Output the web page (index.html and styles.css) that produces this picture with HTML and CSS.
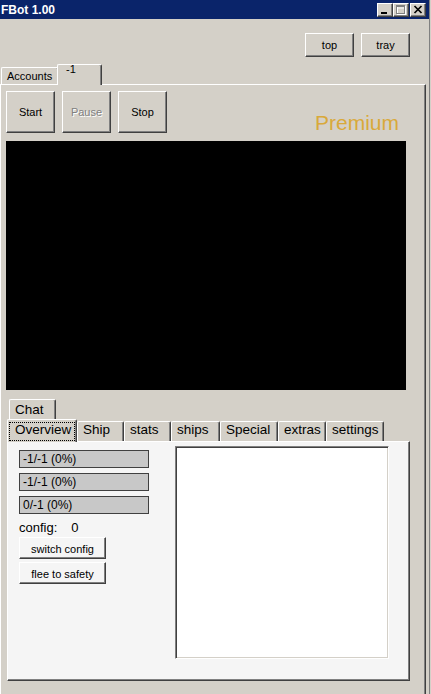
FILE: index.html
```html
<!DOCTYPE html>
<html>
<head>
<meta charset="utf-8">
<title>FBot 1.00</title>
<link rel="stylesheet" href="styles.css">
</head>
<body>
<div class="window">
  <div class="titlebar">
    <span class="title">FBot 1.00</span>
    <div class="wbtns">
      <span class="wbtn"><svg width="14" height="12" viewBox="0 0 14 12"><rect x="3" y="8" width="6" height="2" fill="#000"/></svg></span>
      <span class="wbtn"><svg width="14" height="12" viewBox="0 0 14 12"><g fill="none" stroke="#fff"><rect x="3.5" y="2.5" width="8" height="8"/><line x1="3" y1="4" x2="12" y2="4"/></g><g fill="none" stroke="#808080"><rect x="2.5" y="1.5" width="8" height="8"/><line x1="2" y1="2.5" x2="11" y2="2.5"/></g></svg></span>
      <span class="wbtn close"><svg width="14" height="12" viewBox="0 0 14 12"><path d="M3.5 2 L10.5 9 M10.5 2 L3.5 9" stroke="#000" stroke-width="1.7" fill="none"/></svg></span>
    </div>
  </div>
  <div class="client">
    <div class="toolbar">
      <button class="btn tb-btn">top</button>
      <button class="btn tb-btn">tray</button>
    </div>
    <div class="outer-tabs">
      <div class="tab tab-acc">Accounts</div>
      <div class="tab tab-sel1">-1</div>
    </div>
    <div class="outer-panel">
      <div class="controls">
        <button class="btn ctl">Start</button>
        <button class="btn ctl" disabled>Pause</button>
        <button class="btn ctl">Stop</button>
        <div class="premium">Premium</div>
      </div>
      <div class="screen"></div>
      <div class="chat-row">
        <div class="tab tab-chat">Chat</div>
      </div>
      <div class="inner-tabs">
        <div class="tab itab sel"><span class="focus">Overview</span></div>
        <div class="tab itab w-ship">Ship</div>
        <div class="tab itab w-stats">stats</div>
        <div class="tab itab w-ships">ships</div>
        <div class="tab itab w-special">Special</div>
        <div class="tab itab w-extras">extras</div>
        <div class="tab itab w-settings">settings</div>
      </div>
      <div class="inner-panel">
        <div class="leftcol">
          <div class="bar">-1/-1 (0%)</div>
          <div class="bar">-1/-1 (0%)</div>
          <div class="bar">0/-1 (0%)</div>
          <div class="config"><span>config:</span><span class="cfg-val">0</span></div>
          <button class="btn pbtn">switch config</button>
          <button class="btn pbtn pbtn2">flee to safety</button>
        </div>
        <div class="listbox"></div>
      </div>
    </div>
  </div>
</div>
</body>
</html>
```

FILE: styles.css
```css
* { box-sizing: border-box; }
html, body { margin: 0; padding: 0; }
body {
  width: 431px;
  height: 694px;
  overflow: hidden;
  background: #d4d0c8;
  font-family: "Liberation Sans", Arial, sans-serif;
  font-size: 11px;
  color: #000;
}
.window {
  width: 430px;
  height: 694px;
  border-right: 1px solid #808080;
  display: flex;
  flex-direction: column;
}
.titlebar {
  height: 19px;
  flex: none;
  background: #0a246a;
  display: flex;
  justify-content: space-between;
  align-items: flex-start;
  padding: 0 3px 0 1px;
}
.title {
  color: #fff;
  font-weight: bold;
  font-size: 12px;
  line-height: 17px;
  padding-top: 2px;
}
.wbtns { display: flex; padding-top: 3px; }
.wbtn {
  width: 16px;
  height: 14px;
  background: #d4d0c8;
  border: 1px solid;
  border-color: #fff #404040 #404040 #fff;
  box-shadow: inset -1px -1px #808080;
  display: flex;
}
.wbtn svg { display: block; }
.wbtn.close { margin-left: 1px; }

.client {
  flex: 1;
  display: flex;
  flex-direction: column;
  padding-top: 14px;
  min-height: 0;
}
.toolbar {
  display: flex;
  justify-content: flex-end;
  gap: 7px;
  padding-right: 19px;
}
.btn {
  font-family: "Liberation Sans", Arial, sans-serif;
  font-size: 11px;
  color: #000;
  background: #d4d0c8;
  border: 1px solid;
  border-color: #fff #404040 #404040 #fff;
  box-shadow: inset -1px -1px #808080;
  padding: 0;
  margin: 0;
  border-radius: 0;
}
.btn:disabled { color: #808080; text-shadow: 1px 1px #fff; }
.tb-btn { width: 49px; height: 24px; }

.tab {
  background: #d4d0c8;
  border-top: 1px solid #fff;
  border-left: 1px solid #fff;
  border-right: 1px solid #404040;
  box-shadow: inset -1px 0 #808080;
  border-radius: 2px 2px 0 0;
  white-space: nowrap;
}
.outer-tabs {
  display: flex;
  align-items: flex-end;
  height: 20px;
  margin-top: 7px;
  padding-left: 1px;
}
.tab-acc {
  width: 58px;
  height: 17px;
  padding: 1px 0 0 5px;
  line-height: 15px;
}
.tab-sel1 {
  width: 45px;
  height: 21px;
  margin-left: -2px;
  margin-bottom: -1px;
  padding-left: 8px;
  line-height: 9px;
  position: relative;
  z-index: 2;
}
.outer-panel {
  width: 426px;
  flex: 1;
  border-top: 1px solid #fff;
  border-left: 1px solid #fff;
  border-right: 1px solid #404040;
  box-shadow: inset -1px 0 #808080;
  padding: 6px 5px 0 5px;
}
.controls {
  display: flex;
  gap: 7px;
  align-items: flex-start;
  height: 42px;
}
.ctl { width: 49px; height: 42px; flex: none; }
.premium {
  margin-left: auto;
  margin-right: 21px;
  margin-top: 20px;
  font-size: 21px;
  line-height: 24px;
  color: #d9a93a;
}
.screen {
  width: 400px;
  height: 249px;
  background: #000;
  margin-top: 8px;
}
.chat-row {
  display: flex;
  margin-top: 9px;
  padding-left: 3px;
}
.tab-chat {
  width: 47px;
  height: 20px;
  font-size: 13.5px;
  line-height: 19px;
  padding-left: 5px;
}
.inner-tabs {
  display: flex;
  align-items: flex-end;
  height: 22px;
  padding-left: 3px;
}
.itab {
  height: 20px;
  font-size: 13.5px;
  line-height: 16px;
  padding-left: 5px;
}
.itab.sel {
  width: 70px;
  height: 23px;
  margin-left: -2px;
  margin-bottom: -1px;
  padding: 2px 0 0 1px;
  position: relative;
  z-index: 2;
}
.focus {
  display: block;
  width: 66px;
  height: 19px;
  border: 1px dotted #000;
  padding-left: 5px;
  line-height: 14px;
}
.w-ship { width: 47px; }
.w-stats { width: 47px; }
.w-ships { width: 49px; }
.w-special { width: 58px; }
.w-extras { width: 48px; }
.w-settings { width: 58px; }

.inner-panel {
  width: 403px;
  height: 240px;
  margin-left: 1px;
  background: #f5f5f5;
  border: 1px solid;
  border-color: #fff #404040 #404040 #fff;
  box-shadow: inset -1px -1px #808080;
  padding: 4px 0 0 11px;
  display: flex;
  align-items: flex-start;
  gap: 26px;
}
.leftcol {
  width: 130px;
  margin-top: 4px;
  display: flex;
  flex-direction: column;
  align-items: flex-start;
}
.bar {
  width: 130px;
  height: 18px;
  border: 1px solid #404040;
  background: #c8c8c8;
  font-size: 12px;
  line-height: 16px;
  padding-left: 3px;
}
.bar + .bar { margin-top: 5px; }
.config {
  margin-top: 6px;
  font-size: 13px;
  line-height: 15px;
}
.cfg-val { margin-left: 14px; }
.pbtn {
  width: 87px;
  height: 22px;
  margin-top: 2px;
  background: #f5f5f5;
  padding-top: 1px;
}
.pbtn2 { margin-top: 3px; }
.listbox {
  width: 214px;
  height: 213px;
  background: #fff;
  border: 1px solid;
  border-color: #808080 #fff #fff #808080;
  box-shadow: inset 1px 1px #404040, inset -1px -1px #d4d0c8;
}
```
